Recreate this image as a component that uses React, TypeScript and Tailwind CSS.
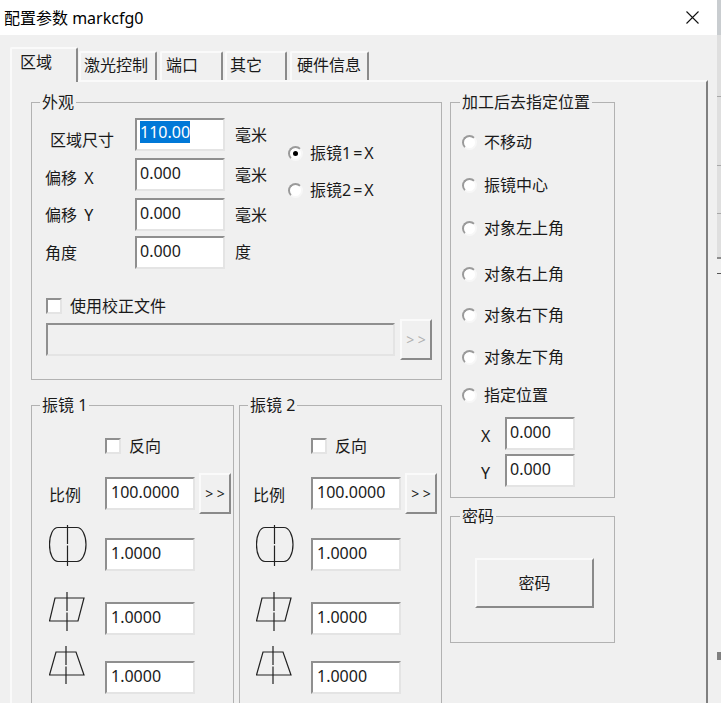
import React from "react";

const font = "font-['Noto_Sans','Noto_Sans_CJK_SC',sans-serif]";
const sunken = "border-2 border-t-[#8f8f8f] border-l-[#8f8f8f] border-b-[#e4e4e4] border-r-[#e4e4e4]";
const raised = "border-2 border-t-[#fafafa] border-l-[#fafafa] border-b-[#8a8a8a] border-r-[#8a8a8a]";

const Group = ({
  title,
  className,
  legendMl = "ml-[9px]",
  children,
}: {
  title: string;
  className: string;
  legendMl?: string;
  children: React.ReactNode;
}) => (
  <fieldset className={`border border-[#b2b2b2] ${className}`}>
    <legend className={`${legendMl} px-[2px] text-[16px] leading-[20px] text-[#1a1a1a]`}>{title}</legend>
    {children}
  </fieldset>
);

const Field = ({
  value,
  w = "w-[90px]",
  pad = "pl-[3px]",
  className = "",
}: {
  value: string;
  w?: string;
  pad?: string;
  className?: string;
}) => (
  <div className={`${sunken} ${w} ${pad} h-[33px] bg-white pt-[1px] text-[16px] leading-[24px] text-[#1a1a1a] ${className}`}>
    {value}
  </div>
);

const Radio = ({ label, checked, className = "" }: { label: React.ReactNode; checked?: boolean; className?: string }) => (
  <div className={`flex items-center gap-[7px] leading-[20px] ${className}`}>
    <span className="flex h-[15px] w-[15px] items-center justify-center rounded-full border-2 border-t-[#9a9a9a] border-l-[#9a9a9a] border-b-[#f7f7f7] border-r-[#f7f7f7] bg-white">
      {checked && <span className="h-[5px] w-[5px] rounded-full bg-black" />}
    </span>
    <span>{label}</span>
  </div>
);

const Check = ({ label, className = "" }: { label: string; className?: string }) => (
  <div className={`flex items-center gap-[8px] leading-[20px] ${className}`}>
    <span className={`h-[16px] w-[16px] bg-white ${sunken}`} />
    <span>{label}</span>
  </div>
);

const MoreButton = ({ disabled, className = "" }: { disabled?: boolean; className?: string }) => (
  <div
    className={`${raised} flex h-[41px] w-[32px] items-center justify-center text-[14px] ${
      disabled ? "text-[#b0b0b0]" : "text-[#1a1a1a]"
    } ${className}`}
  >
    &gt; &gt;
  </div>
);

const BarrelIcon = () => (
  <svg width="38" height="42" viewBox="0 0 38 42" fill="none" stroke="#222" strokeWidth="1.2">
    <path d="M9 2.5H28C33 2.5 37 10 37 19.5C37 29 33 36.5 28 36.5H9C4 36.5 0.5 29 0.5 19.5C0.5 10 4 2.5 9 2.5Z" />
    <path d="M18.5 0V19M18.5 20.5V41" />
  </svg>
);

const SkewIcon = () => (
  <svg width="38" height="40" viewBox="0 0 38 40" fill="none" stroke="#222" strokeWidth="1.2">
    <path d="M6 6H35L29 29H0.5Z" />
    <path d="M18 0V19M18 20.5V39" />
  </svg>
);

const TrapezoidIcon = () => (
  <svg width="38" height="40" viewBox="0 0 38 40" fill="none" stroke="#222" strokeWidth="1.2">
    <path d="M7 6H27L35 29H0.5Z" />
    <path d="M17 0V19M17 20.5V38" />
  </svg>
);

const Galvo = ({
  title,
  className,
  legendMl,
  checkMl,
  col,
  labelPl,
  iconPl,
}: {
  title: string;
  className: string;
  legendMl: string;
  checkMl: string;
  col: string;
  labelPl: string;
  iconPl: string;
}) => (
  <Group title={title} legendMl={legendMl} className={`h-[340px] ${className}`}>
    <Check label="反向" className={`mt-[21px] ${checkMl}`} />
    <div className="mt-[17px] flex items-center">
      <span className={`${col} ${labelPl} pt-[2px]`}>比例</span>
      <Field value="100.0000" pad="pl-[4px]" />
      <MoreButton className="ml-[4px]" />
    </div>
    <div className="mt-[11px] flex items-start">
      <div className={`${col} ${iconPl}`}>
        <BarrelIcon />
      </div>
      <Field value="1.0000" pad="pl-[4px]" className="mt-[13px]" />
    </div>
    <div className="mt-[21px] flex items-start">
      <div className={`${col} ${iconPl}`}>
        <SkewIcon />
      </div>
      <Field value="1.0000" pad="pl-[4px]" className="mt-[10px]" />
    </div>
    <div className="mt-[11px] flex items-start">
      <div className={`${col} ${iconPl}`}>
        <TrapezoidIcon />
      </div>
      <Field value="1.0000" pad="pl-[4px]" className="mt-[15px]" />
    </div>
  </Group>
);

const tabs = [
  { label: "激光控制", cls: "w-[78px] mr-[3px] pl-[3px]" },
  { label: "端口", cls: "w-[63px] mr-[2px] pl-[4px]" },
  { label: "其它", cls: "w-[62px] mr-[3px] pl-[3px]" },
  { label: "硬件信息", cls: "w-[79px] pl-[5px]" },
];

const rows = [
  { label: "区域尺寸", value: "110.00", unit: "毫米", cls: "pl-[5px] pt-[12px]", unitPt: "pt-[7px]", mt: "" },
  { label: "偏移 X", value: "0.000", unit: "毫米", cls: "pt-[10px]", unitPt: "pt-[7px]", mt: "mt-[7px]" },
  { label: "偏移 Y", value: "0.000", unit: "毫米", cls: "pt-[7px]", unitPt: "pt-[7px]", mt: "mt-[7px]" },
  { label: "角度", value: "0.000", unit: "度", cls: "pt-[7px]", unitPt: "pt-[6px]", mt: "mt-[5px]" },
];

export default function App() {
  return (
    <div className={`flex h-[703px] w-[721px] overflow-hidden bg-white text-[16px] text-[#1a1a1a] ${font}`}>
      <div className="flex w-[717px] flex-col">
        {/* Title bar */}
        <div className="flex h-[35px] shrink-0 items-center justify-between pl-[4px] pr-[18px] text-[16px] text-black">
          <span>配置参数 markcfg0</span>
          <svg width="13" height="13" viewBox="0 0 13 13" stroke="#111" strokeWidth="1.1">
            <path d="M0.5 0.5L12.5 12.5M12.5 0.5L0.5 12.5" />
          </svg>
        </div>

        <div className="flex-1 bg-[#f0f0f0] pl-[10px] pr-[9px] pt-[12px]">
          {/* Tabs */}
          <div className="relative z-10 flex h-[33px] items-end">
            <div className="-mb-[2px] mr-px h-[35px] w-[68px] rounded-t-[2px] border-2 border-b-0 border-t-[#fafafa] border-l-[#fafafa] border-r-[#8a8a8a] bg-[#f0f0f0] pl-[8px] pt-[2px] leading-[22px]">
              区域
            </div>
            {tabs.map((tab) => (
              <div
                key={tab.label}
                className={`${tab.cls} h-[29px] rounded-t-[2px] border-2 border-b-0 border-t-[#fafafa] border-l-[#fafafa] border-r-[#8a8a8a] pt-[1px] leading-[22px]`}
              >
                {tab.label}
              </div>
            ))}
          </div>

          {/* Page */}
          <div className="flex h-[640px] gap-[8px] border-2 border-b-0 border-t-[#fafafa] border-l-[#fafafa] border-r-[#808080] pl-[19px] pt-[10px]">
            <div className="w-[411px]">
              <Group title="外观" legendMl="ml-[8px]" className="h-[288px]">
                <div className="flex">
                  <div className="w-[256px] pl-[13px] pt-[6px]">
                    {rows.map((row, i) => (
                      <div key={row.label} className={`flex ${row.mt}`}>
                        <span className={`w-[90px] leading-[20px] [word-spacing:3px] ${row.cls}`}>{row.label}</span>
                        {i === 0 ? (
                          <div className={`${sunken} h-[33px] w-[90px] bg-white pl-[3px] pt-[1px] leading-[22px]`}>
                            <span className="bg-[#0078d7] text-white">{row.value}</span>
                          </div>
                        ) : (
                          <Field value={row.value} />
                        )}
                        <span className={`ml-[10px] leading-[20px] ${row.unitPt}`}>{row.unit}</span>
                      </div>
                    ))}
                  </div>
                  <div className="pt-[31px]">
                    <Radio label={<>振镜<span className="tracking-[2px]">1=X</span></>} checked />
                    <Radio label={<>振镜<span className="tracking-[2px]">2=X</span></>} className="mt-[17px]" />
                  </div>
                </div>
                <Check label="使用校正文件" className="ml-[14px] mt-[27px]" />
                <div className="ml-[14px] mt-[3px] flex items-center">
                  <div className={`${sunken} h-[33px] w-[349px]`} />
                  <MoreButton disabled className="ml-[5px]" />
                </div>
              </Group>
              <div className="mt-[15px] flex gap-[5px]">
                <Galvo
                  title="振镜 1"
                  className="w-[203px]"
                  legendMl="ml-[8px]"
                  checkMl="ml-[73px]"
                  col="w-[73px]"
                  labelPl="pl-[17px]"
                  iconPl="pl-[17px]"
                />
                <Galvo
                  title="振镜 2"
                  className="w-[203px]"
                  legendMl="ml-[8px]"
                  checkMl="ml-[71px]"
                  col="w-[71px]"
                  labelPl="pl-[13px]"
                  iconPl="pl-[16px]"
                />
              </div>
            </div>

            <div className="w-[165px]">
              <Group title="加工后去指定位置" className="h-[406px]">
                <div className="pl-[11px] pt-[20px]">
                  <Radio label="不移动" />
                  <Radio label="振镜中心" className="mt-[23px]" />
                  <Radio label="对象左上角" className="mt-[23px]" />
                  <Radio label="对象右上角" className="mt-[26px]" />
                  <Radio label="对象右下角" className="mt-[21px]" />
                  <Radio label="对象左下角" className="mt-[22px]" />
                  <Radio label="指定位置" className="mt-[18px]" />
                </div>
                <div className="mt-[12px] flex items-center pl-[30px]">
                  <span className="w-[24px] pt-[5px]">X</span>
                  <Field value="0.000" w="w-[70px]" />
                </div>
                <div className="mt-[4px] flex items-center pl-[30px]">
                  <span className="w-[24px] pt-[5px]">Y</span>
                  <Field value="0.000" w="w-[70px]" />
                </div>
              </Group>
              <Group title="密码" className="mt-[8px] h-[137px]">
                <div className="pl-[24px] pt-[32px]">
                  <div className={`${raised} flex h-[50px] w-[119px] items-center justify-center`}>密码</div>
                </div>
              </Group>
            </div>
          </div>
        </div>
      </div>

      {/* Sliver of the window behind the dialog */}
      <div className="flex flex-1 flex-col bg-[#f0f0f0]">
        <div className="h-[35px] bg-[#c9cdd0]" />
        <div className="h-[62px] border-b border-[#a8a8a8] bg-[#dfdfdf]" />
        <div className="h-[69px] border-b border-[#a8a8a8] bg-[#dfdfdf]" />
        <div className="h-[48px] border-b border-[#a8a8a8] bg-[#dfdfdf]" />
        <div className="h-[45px] border-b-2 border-[#8c8c8c] bg-[#dfdfdf]" />
        <div className="h-[15px] border-b border-[#555]" />
        <div className="h-[378px]" />
        <div className="h-[8px] bg-[#808080]" />
      </div>
    </div>
  );
}
